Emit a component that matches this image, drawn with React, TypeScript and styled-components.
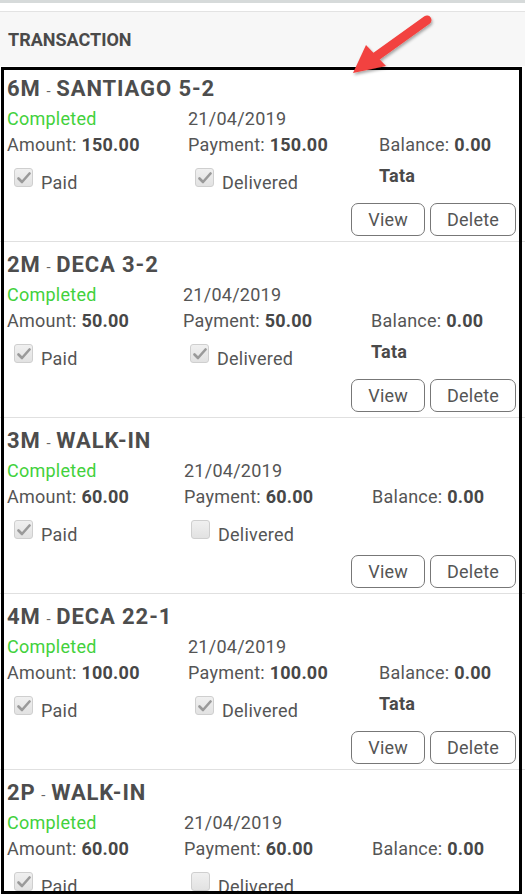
import React from "react";
import styled, { createGlobalStyle } from "styled-components";

const Global = createGlobalStyle`
  html, body { margin: 0; padding: 0; background: #ffffff; }
  body {
    width: 525px;
    height: 895px;
    overflow: hidden;
    font-family: Roboto, "Noto Sans", Arial, sans-serif;
    color: #555555;
  }
  * { box-sizing: border-box; }
`;

const Page = styled.div`
  position: relative;
  width: 525px;
  height: 895px;
  overflow: hidden;
  background: #ffffff;
`;

const TopStrip = styled.div`
  height: 3px;
  background: #d6dada;
`;

const Spacer = styled.div`
  height: 9px;
  background: #ffffff;
  border-bottom: 1px solid #e3e3e3;
`;

const PanelHeader = styled.div`
  height: 54px;
  display: flex;
  align-items: center;
  padding-left: 8px;
  background: #f7f7f7;
  font-size: 18px;
  font-weight: 700;
  color: #4a4a4a;
`;

const Frame = styled.div`
  position: relative;
  height: 828px;
  overflow: hidden;
  background: #ffffff;
  &::after {
    content: "";
    position: absolute;
    left: 1px;
    right: 3px;
    top: 1px;
    bottom: 0;
    border: 3px solid #000000;
    pointer-events: none;
  }
`;

const Card = styled.div`
  padding: 9px 9px 7px 7px;
  border-bottom: 1px solid #e0e0e0;
  height: 176px;
`;

const Title = styled.div`
  font-size: 22px;
  line-height: 28px;
  font-weight: 700;
  color: #4d4d4d;
  letter-spacing: 0.9px;
  white-space: nowrap;
`;

const Dash = styled.span`
  font-size: 15px;
  font-weight: 400;
  letter-spacing: 0;
  padding: 0 2px;
  color: #666666;
`;

const Grid = styled.div<{ $c1: number; $c2: number }>`
  display: grid;
  grid-template-columns: ${(p) => p.$c1}px ${(p) => p.$c2}px 1fr;
  font-size: 18px;
  line-height: 26px;
  letter-spacing: 0.25px;
  color: #555555;
  white-space: nowrap;
`;

const Status = styled.div`
  color: #42d13c;
  margin-top: 1px;
`;

const Cell = styled.div<{ $top?: number }>`
  margin-top: ${(p) => p.$top ?? 0}px;
`;

const Strong = styled.b`
  font-weight: 700;
  color: #474747;
`;

const CheckCell = styled.div`
  display: flex;
  align-items: flex-start;
  margin-top: 5px;
  height: 33px;
  padding-left: 7px;
`;

const Box = styled.span`
  width: 19px;
  height: 19px;
  margin-top: 5px;
  margin-right: 8px;
  border: 1px solid #cfcfcf;
  border-radius: 3px;
  background: linear-gradient(#f0f0f0, #e2e2e2);
  display: flex;
  align-items: center;
  justify-content: center;
  flex: none;
`;

const Label = styled.span`
  margin-top: 7px;
`;

const Owner = styled.div`
  margin-top: 5px;
  font-weight: 700;
  color: #4a4a4a;
`;

const Actions = styled.div`
  display: flex;
  justify-content: flex-end;
  gap: 5px;
  margin-top: 7px;
`;

const Button = styled.button`
  height: 33px;
  padding: 0 16px;
  border: 1px solid #777777;
  border-radius: 7px;
  background: #ffffff;
  font-family: Roboto, "Noto Sans", Arial, sans-serif;
  font-size: 18px;
  letter-spacing: 0.2px;
  color: #555555;
  line-height: 31px;
`;

const ArrowLayer = styled.svg`
  position: absolute;
  left: 0;
  top: 0;
  pointer-events: none;
`;

type Tx = {
  code: string;
  name: string;
  amount: string;
  payment: string;
  paid: boolean;
  delivered: boolean;
  owner?: string;
  c1: number;
  c2: number;
};

const data: Tx[] = [
  { code: "6M", name: "SANTIAGO 5-2", amount: "150.00", payment: "150.00", paid: true, delivered: true, owner: "Tata", c1: 181, c2: 191 },
  { code: "2M", name: "DECA 3-2", amount: "50.00", payment: "50.00", paid: true, delivered: true, owner: "Tata", c1: 176, c2: 188 },
  { code: "3M", name: "WALK-IN", amount: "60.00", payment: "60.00", paid: true, delivered: false, c1: 177, c2: 188 },
  { code: "4M", name: "DECA 22-1", amount: "100.00", payment: "100.00", paid: true, delivered: true, owner: "Tata", c1: 181, c2: 191 },
  { code: "2P", name: "WALK-IN", amount: "60.00", payment: "60.00", paid: true, delivered: false, c1: 177, c2: 188 },
];

const Check = ({ on }: { on: boolean }) => (
  <Box>
    {on && (
      <svg width="14" height="12" viewBox="0 0 14 12">
        <path d="M1.5 6.5 L5 10 L12.5 1.5" fill="none" stroke="#9a9a9a" strokeWidth="2.6" strokeLinecap="round" strokeLinejoin="round" />
      </svg>
    )}
  </Box>
);

const TxCard = ({ t }: { t: Tx }) => (
  <Card>
    <Title>
      {t.code}
      <Dash> - </Dash>
      {t.name}
    </Title>
    <Grid $c1={t.c1} $c2={t.c2}>
      <Status>Completed</Status>
      <Cell $top={1}>21/04/2019</Cell>
      <Cell $top={1} />
      <Cell>
        Amount: <Strong>{t.amount}</Strong>
      </Cell>
      <Cell>
        Payment: <Strong>{t.payment}</Strong>
      </Cell>
      <Cell>
        Balance: <Strong>0.00</Strong>
      </Cell>
      <CheckCell>
        <Check on={t.paid} />
        <Label>Paid</Label>
      </CheckCell>
      <CheckCell>
        <Check on={t.delivered} />
        <Label>Delivered</Label>
      </CheckCell>
      <Owner>{t.owner ?? ""}</Owner>
    </Grid>
    <Actions>
      <Button>View</Button>
      <Button>Delete</Button>
    </Actions>
  </Card>
);

export default function App() {
  return (
    <Page>
      <Global />
      <TopStrip />
      <Spacer />
      <PanelHeader>TRANSACTION</PanelHeader>
      <Frame>
        {data.map((t, i) => (
          <TxCard key={i} t={t} />
        ))}
      </Frame>
      <ArrowLayer width="525" height="120" viewBox="0 0 525 120">
        <defs>
          <filter id="sh" x="-30%" y="-30%" width="160%" height="160%">
            <feDropShadow dx="1" dy="2" stdDeviation="1.5" floodColor="#000" floodOpacity="0.35" />
          </filter>
        </defs>
        <g filter="url(#sh)">
          <line x1="427" y1="20" x2="374" y2="58" stroke="#f2433f" strokeWidth="9" strokeLinecap="round" />
          <polygon points="353,73 366,45 386,66" fill="#f2433f" />
        </g>
      </ArrowLayer>
    </Page>
  );
}
